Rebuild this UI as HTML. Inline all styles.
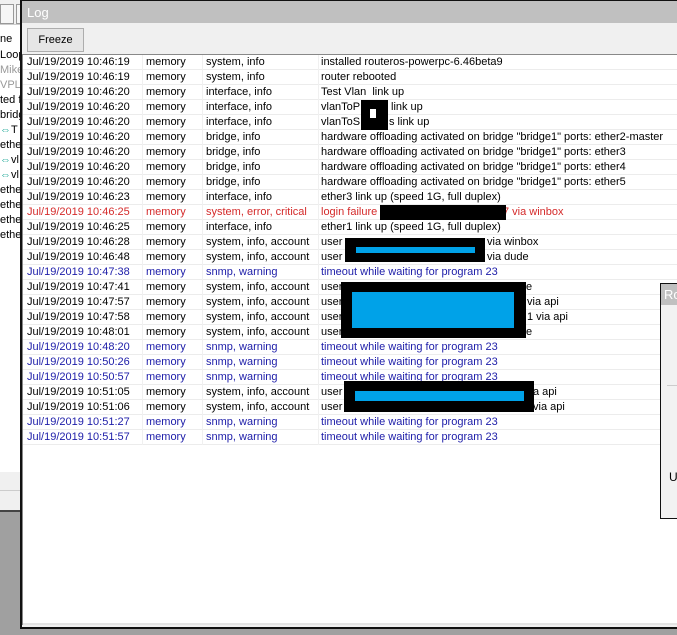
<!DOCTYPE html>
<html><head><style>
*{margin:0;padding:0;box-sizing:border-box}
body{width:677px;height:635px;overflow:hidden;background:#a0a0a0;position:relative;font-family:"Liberation Sans",sans-serif;font-size:11px;color:#000}
.a{position:absolute}
.row{position:absolute;left:0;height:15px;width:654px;border-bottom:1px solid #ececec;white-space:nowrap;line-height:15px}
.row span{position:absolute;top:0}
.c1{left:4px}.c2{left:123px}.c3{left:183px}.c4{left:298px}
.b{color:#1c1ca8}.r{color:#d42a2a}
.lp{position:absolute;left:0;width:20px;height:15px;line-height:15px;overflow:hidden;white-space:nowrap;font-size:11px}
</style></head><body>
<div class="a" style="left:0;top:0;width:22px;height:512px;background:#f0f0f0"></div>
<div class="a" style="left:0;top:24px;width:22px;height:448px;background:#fff"></div>
<div class="a" style="left:0;top:4px;width:14px;height:20px;border:1px solid #999;background:#f6f6f6"></div>
<div class="a" style="left:16px;top:4px;width:6px;height:20px;border:1px solid #999;background:#f6f6f6"></div>
<div class="a" style="left:0;top:510px;width:22px;height:2px;background:#444"></div>
<div class="a" style="left:0;top:490px;width:22px;height:1px;background:#ccc"></div>
<div class="a" style="left:0;top:24px;width:22px;height:1px;background:#ccc"></div>
<div class="lp" style="top:32px">ne</div>
<div class="lp" style="top:48px">Loop</div>
<div class="lp" style="top:63px;color:#999">Mike</div>
<div class="lp" style="top:78px;color:#999">VPLS</div>
<div class="lp" style="top:93px">ted f</div>
<div class="lp" style="top:108px">bridg</div>
<div class="lp" style="top:123px"><span style="color:#2a9">⇔</span>T</div>
<div class="lp" style="top:138px">ether</div>
<div class="lp" style="top:153px"><span style="color:#2a9">⇔</span>vl</div>
<div class="lp" style="top:168px"><span style="color:#2a9">⇔</span>vl</div>
<div class="lp" style="top:183px">ether</div>
<div class="lp" style="top:198px">ether</div>
<div class="lp" style="top:213px">ether</div>
<div class="lp" style="top:228px">ether</div>

<div class="a" style="left:20px;top:0;width:657px;height:629px;background:#f0f0f0;border-left:2px solid #111;border-top:1px solid #111;border-bottom:2px solid #111"></div>
<div class="a" style="left:22px;top:1px;width:655px;height:22px;background:#c0c0c0;color:#fff;font-size:13px;line-height:24px;padding-left:5px">Log</div>
<div class="a" style="left:27px;top:28px;width:57px;height:24px;border:1px solid #adadad;background:#e6e6e6;text-align:center;line-height:22px;font-size:11px">Freeze</div>
<div class="a" style="left:22px;top:54px;width:655px;height:571px;background:#fff;border-top:1px solid #888;border-left:1px solid #888"></div>
<div class="a" style="left:23px;top:55px;width:654px;height:570px">
<div class="row" style="top:0"><span class="c1">Jul/19/2019 10:46:19</span><span class="c2">memory</span><span class="c3">system, info</span><span class="c4">installed routeros-powerpc-6.46beta9</span></div>
<div class="row" style="top:15px"><span class="c1">Jul/19/2019 10:46:19</span><span class="c2">memory</span><span class="c3">system, info</span><span class="c4">router rebooted</span></div>
<div class="row" style="top:30px"><span class="c1">Jul/19/2019 10:46:20</span><span class="c2">memory</span><span class="c3">interface, info</span><span class="c4">Test Vlan&nbsp; link up</span></div>
<div class="row" style="top:45px"><span class="c1">Jul/19/2019 10:46:20</span><span class="c2">memory</span><span class="c3">interface, info</span><span class="c4">vlanToP</span><span style="left:368px">link up</span></div>
<div class="row" style="top:60px"><span class="c1">Jul/19/2019 10:46:20</span><span class="c2">memory</span><span class="c3">interface, info</span><span class="c4">vlanToS</span><span style="left:366px">s link up</span></div>
<div class="row" style="top:75px"><span class="c1">Jul/19/2019 10:46:20</span><span class="c2">memory</span><span class="c3">bridge, info</span><span class="c4">hardware offloading activated on bridge "bridge1" ports: ether2-master</span></div>
<div class="row" style="top:90px"><span class="c1">Jul/19/2019 10:46:20</span><span class="c2">memory</span><span class="c3">bridge, info</span><span class="c4">hardware offloading activated on bridge "bridge1" ports: ether3</span></div>
<div class="row" style="top:105px"><span class="c1">Jul/19/2019 10:46:20</span><span class="c2">memory</span><span class="c3">bridge, info</span><span class="c4">hardware offloading activated on bridge "bridge1" ports: ether4</span></div>
<div class="row" style="top:120px"><span class="c1">Jul/19/2019 10:46:20</span><span class="c2">memory</span><span class="c3">bridge, info</span><span class="c4">hardware offloading activated on bridge "bridge1" ports: ether5</span></div>
<div class="row" style="top:135px"><span class="c1">Jul/19/2019 10:46:23</span><span class="c2">memory</span><span class="c3">interface, info</span><span class="c4">ether3 link up (speed 1G, full duplex)</span></div>
<div class="row r" style="top:150px"><span class="c1">Jul/19/2019 10:46:25</span><span class="c2">memory</span><span class="c3">system, error, critical</span><span class="c4">login failure f</span><span style="left:480px">7 via winbox</span></div>
<div class="row" style="top:165px"><span class="c1">Jul/19/2019 10:46:25</span><span class="c2">memory</span><span class="c3">interface, info</span><span class="c4">ether1 link up (speed 1G, full duplex)</span></div>
<div class="row" style="top:180px"><span class="c1">Jul/19/2019 10:46:28</span><span class="c2">memory</span><span class="c3">system, info, account</span><span class="c4">user a</span><span style="left:464px">via winbox</span></div>
<div class="row" style="top:195px"><span class="c1">Jul/19/2019 10:46:48</span><span class="c2">memory</span><span class="c3">system, info, account</span><span class="c4">user a</span><span style="left:464px">via dude</span></div>
<div class="row b" style="top:210px"><span class="c1">Jul/19/2019 10:47:38</span><span class="c2">memory</span><span class="c3">snmp, warning</span><span class="c4">timeout while waiting for program 23</span></div>
<div class="row" style="top:225px"><span class="c1">Jul/19/2019 10:47:41</span><span class="c2">memory</span><span class="c3">system, info, account</span><span class="c4">user</span><span style="left:503px">e</span></div>
<div class="row" style="top:240px"><span class="c1">Jul/19/2019 10:47:57</span><span class="c2">memory</span><span class="c3">system, info, account</span><span class="c4">user</span><span style="left:504px">via api</span></div>
<div class="row" style="top:255px"><span class="c1">Jul/19/2019 10:47:58</span><span class="c2">memory</span><span class="c3">system, info, account</span><span class="c4">user</span><span style="left:504px">1 via api</span></div>
<div class="row" style="top:270px"><span class="c1">Jul/19/2019 10:48:01</span><span class="c2">memory</span><span class="c3">system, info, account</span><span class="c4">user</span><span style="left:503px">e</span></div>
<div class="row b" style="top:285px"><span class="c1">Jul/19/2019 10:48:20</span><span class="c2">memory</span><span class="c3">snmp, warning</span><span class="c4">timeout while waiting for program 23</span></div>
<div class="row b" style="top:300px"><span class="c1">Jul/19/2019 10:50:26</span><span class="c2">memory</span><span class="c3">snmp, warning</span><span class="c4">timeout while waiting for program 23</span></div>
<div class="row b" style="top:315px"><span class="c1">Jul/19/2019 10:50:57</span><span class="c2">memory</span><span class="c3">snmp, warning</span><span class="c4">timeout while waiting for program 23</span></div>
<div class="row" style="top:330px"><span class="c1">Jul/19/2019 10:51:05</span><span class="c2">memory</span><span class="c3">system, info, account</span><span class="c4">user</span><span style="left:510px">a api</span></div>
<div class="row" style="top:345px"><span class="c1">Jul/19/2019 10:51:06</span><span class="c2">memory</span><span class="c3">system, info, account</span><span class="c4">user</span><span style="left:510px">via api</span></div>
<div class="row b" style="top:360px"><span class="c1">Jul/19/2019 10:51:27</span><span class="c2">memory</span><span class="c3">snmp, warning</span><span class="c4">timeout while waiting for program 23</span></div>
<div class="row b" style="top:375px"><span class="c1">Jul/19/2019 10:51:57</span><span class="c2">memory</span><span class="c3">snmp, warning</span><span class="c4">timeout while waiting for program 23</span></div>
<div class="a" style="left:119px;top:0;width:1px;height:390px;background:#f0f0f0"></div>
<div class="a" style="left:179px;top:0;width:1px;height:390px;background:#f0f0f0"></div>
<div class="a" style="left:295px;top:0;width:1px;height:390px;background:#f0f0f0"></div>
</div>
<div class="a" style="left:23px;top:623px;width:654px;height:2px;background:#e4e4e4"></div>

<div class="a" style="left:361px;top:100px;width:27px;height:30px;background:#000"></div>
<div class="a" style="left:370px;top:109px;width:6px;height:9px;background:#fff"></div>
<div class="a" style="left:380px;top:205px;width:126px;height:15px;background:#000"></div>
<div class="a" style="left:345px;top:238px;width:140px;height:24px;background:#000"></div>
<div class="a" style="left:356px;top:247px;width:119px;height:6px;background:#00a2e8"></div>
<div class="a" style="left:341px;top:282px;width:185px;height:56px;background:#000"></div>
<div class="a" style="left:352px;top:292px;width:162px;height:36px;background:#00a2e8"></div>
<div class="a" style="left:344px;top:381px;width:190px;height:31px;background:#000"></div>
<div class="a" style="left:355px;top:391px;width:169px;height:10px;background:#00a2e8"></div>

<div class="a" style="left:660px;top:283px;width:17px;height:236px;background:#f2f2f2;border:1px solid #111;border-right:none"></div>
<div class="a" style="left:661px;top:284px;width:16px;height:21px;background:#c0c0c0;color:#fff;font-size:13px;line-height:22px;padding-left:3px;overflow:hidden">Ro</div>
<div class="a" style="left:667px;top:385px;width:10px;height:1px;background:#ccc"></div>
<div class="a" style="left:669px;top:470px;font-size:12px">U</div>
</body></html>
